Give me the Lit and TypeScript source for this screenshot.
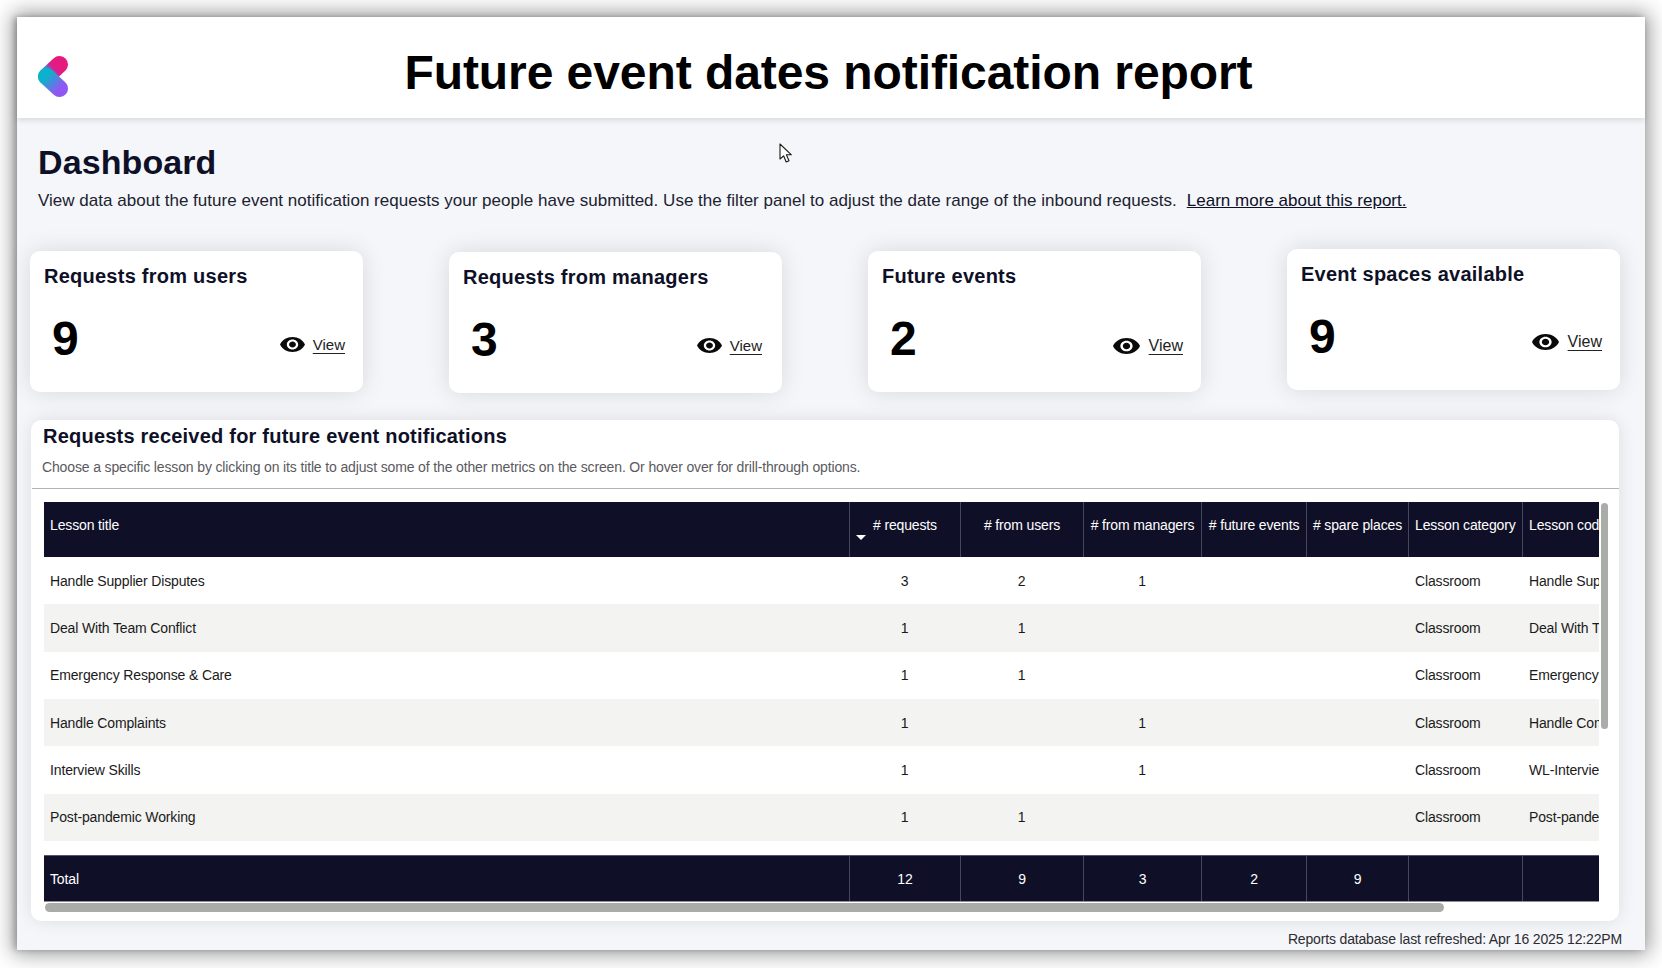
import { LitElement, html, css, svg } from "lit";
import { customElement } from "lit/decorators.js";

const eyePath = "M12 4.5C7 4.5 2.73 7.61 1 12c1.73 4.39 6 7.5 11 7.5s9.27-3.11 11-7.5c-1.73-4.39-6-7.5-11-7.5zM12 17c-2.76 0-5-2.24-5-5s2.24-5 5-5 5 2.24 5 5-2.24 5-5 5zm0-8c-1.66 0-3 1.34-3 3s1.34 3 3 3 3-1.34 3-3-1.34-3-3-3z";

const cards = [
  { title: "Requests from users", value: "9", cls: "" },
  { title: "Requests from managers", value: "3", cls: "c2" },
  { title: "Future events", value: "2", cls: "c3" },
  { title: "Event spaces available", value: "9", cls: "c4" },
];

const heads = ["Lesson title", "# requests", "# from users", "# from managers", "# future events", "# spare places", "Lesson category", "Lesson code"];

const rows = [
  ["Handle Supplier Disputes", "3", "2", "1", "", "", "Classroom", "Handle Supplier Disputes"],
  ["Deal With Team Conflict", "1", "1", "", "", "", "Classroom", "Deal With Team Conflict"],
  ["Emergency Response & Care", "1", "1", "", "", "", "Classroom", "Emergency Response & Care"],
  ["Handle Complaints", "1", "", "1", "", "", "Classroom", "Handle Complaints"],
  ["Interview Skills", "1", "", "1", "", "", "Classroom", "WL-Interview Skills"],
  ["Post-pandemic Working", "1", "1", "", "", "", "Classroom", "Post-pandemic Working"],
];

const totals = ["Total", "12", "9", "3", "2", "9", "", ""];

@customElement("app-root")
export class AppRoot extends LitElement {
  static styles = css`
    :host { display: block; width: 1662px; height: 968px; background: #fff; font-family: "Liberation Sans", Arial, sans-serif; overflow: hidden; }
    .outer { padding: 17px; height: 968px; box-sizing: border-box; }
    .window { position: relative; height: 933px; background: #f5f6fa; box-shadow: 0 0 20px 4px rgba(0,0,0,.4), -3px 0 6px rgba(0,0,0,.2); display: flex; flex-direction: column; }
    .top { height: 101px; box-sizing: border-box; background: #fff; box-shadow: 0 2px 6px rgba(0,0,0,.13); display: grid; grid-template-columns: 1fr auto 1fr; align-items: center; padding: 0 26px 0 21px; flex: none; }
    .logo { display: block; margin-top: 18px; }
    h1 { margin: 11px 0 0; font-size: 48px; line-height: 56px; font-weight: 700; color: #000; letter-spacing: -.07px; white-space: nowrap; }
    .intro { padding: 24px 0 0 21px; flex: none; }
    h2 { margin: 0; font-size: 34px; line-height: 40px; font-weight: 700; color: #0e1027; letter-spacing: .1px; }
    .desc { margin: 8px 0 0; font-size: 17px; line-height: 22px; letter-spacing: .02px; color: #202230; white-space: nowrap; display: flex; }
    .desc a { color: #0e1027; text-decoration: underline; margin-left: 10px; }
    .cards { display: flex; gap: 86px; padding: 0 0 0 13px; margin-top: 39px; height: 144px; flex: none; }
    .card { width: 333px; height: 141px; box-sizing: border-box; background: #fff; border-radius: 10px; box-shadow: 0 0 24px rgba(0,0,0,.12); padding: 13px 18px 0 14px; }
    .card.c2 { margin-top: 1px; }
    .card.c4 { margin-top: -2px; }
    .card-title { font-size: 20px; line-height: 24px; font-weight: 700; color: #0e1027; letter-spacing: .25px; white-space: nowrap; }
    .card-body { display: flex; align-items: center; margin-top: 23px; }
    .num { font-size: 48px; line-height: 56px; font-weight: 700; color: #000; margin-left: 8px; flex: 1; }
    .view { display: flex; align-items: center; gap: 8px; margin-top: 10px; font-size: 15px; color: #222; }
    .view svg { display: block; }
    .view span { text-decoration: underline; text-underline-offset: 3px; }
    .c2 .view { margin-right: 2px; }
    .c3 .view { font-size: 16px; margin-top: 14px; gap: 9px; }
    .c4 .view { font-size: 16px; gap: 9px; }
    .panel { margin: 25px 0 0 14px; width: 1588px; height: 501px; box-sizing: border-box; background: #fff; border-radius: 10px; box-shadow: 0 0 18px rgba(0,0,0,.1); flex: none; display: flex; flex-direction: column; }
    .panel h3 { margin: 4px 0 0 12px; font-size: 20px; line-height: 24px; font-weight: 700; color: #0e1027; letter-spacing: .22px; white-space: nowrap; }
    .panel p { margin: 8px 0 0 11px; font-size: 14px; letter-spacing: -.14px; line-height: 22px; color: #5a5a5e; white-space: nowrap; }
    .rule { height: 1px; background: #b4b4b4; margin: 10px 0 0 1px; flex: none; }
    .tablewrap { margin: 13px 0 0 13px; }
    .scroller { display: flex; align-items: flex-start; }
    .table { width: 1555px; height: 400px; overflow: hidden; display: flex; flex-direction: column; flex: none; }
    .row { display: grid; grid-template-columns: 805px 111px 123px 118px 105px 102px 114px 260px; font-size: 14px; letter-spacing: -.14px; color: #1a1a1a; }
    .cell { padding: 0 6px; display: flex; align-items: center; white-space: nowrap; overflow: hidden; box-sizing: border-box; min-width: 0; }
    .cell.end { padding-left: 7px; }
    .num-cell { justify-content: center; }
    .head, .total { background: #0f1027; color: #fff; flex: none; }
    .head { height: 55px; }
    .head .cell { border-left: 1px solid #45475c; padding-bottom: 9px; position: relative; }
    .head .cell.end { padding-left: 6px; }
    .head .cell:first-child, .total .cell:first-child { border-left: none; }
    .sort { position: absolute; left: 6px; top: 33px; width: 0; height: 0; border-left: 5px solid transparent; border-right: 5px solid transparent; border-top: 5px solid #fff; }
    .body-row { height: 47.33px; flex: none; }
    .body-row:nth-child(even) { background: #f3f3f1; }
    .rows { flex: none; }
    .total { height: 47px; margin-top: 14px; box-sizing: border-box; border-top: 1px solid #55566a; border-bottom: 1px solid #8d8e99; }
    .total .cell { border-left: 1px solid #45475c; padding-top: 2px; }
    .vthumb { width: 7px; height: 226px; margin: 1px 0 0 2px; border-radius: 4px; background: #a9aca9; flex: none; }
    .hthumb { width: 1399px; height: 9px; margin: 1px 0 0 1px; border-radius: 5px; background: #a9aca9; }
    .foot { margin: 8px 23px 0 0; text-align: right; font-size: 14px; letter-spacing: -.16px; line-height: 20px; color: #2c2c30; white-space: nowrap; }
    .cursor { position: absolute; left: 762px; top: 126px; display: block; }
  `;

  private eye(w: number, h: number) {
    return html`<svg width=${w} height=${h} viewBox="1 4.5 22 15" preserveAspectRatio="none"><path fill="#0a0a0a" d=${eyePath}></path></svg>`;
  }

  private logo() {
    return html`<svg class="logo" width="30" height="41" viewBox="0 0 30 41">
      <defs>
        <linearGradient id="lgA" gradientUnits="userSpaceOnUse" x1="21.5" y1="8.5" x2="8.5" y2="20.5">
          <stop offset="0" stop-color="#e8197c"></stop>
          <stop offset=".4" stop-color="#d8208e"></stop>
          <stop offset=".62" stop-color="#5a78c8"></stop>
          <stop offset="1" stop-color="#0cb2cc"></stop>
        </linearGradient>
        <linearGradient id="lgB" gradientUnits="userSpaceOnUse" x1="8.5" y1="20.5" x2="21.5" y2="32.5">
          <stop offset="0" stop-color="#0cb2cc"></stop>
          <stop offset="1" stop-color="#9058f2"></stop>
        </linearGradient>
      </defs>
      ${svg`<line x1="21.5" y1="8.5" x2="8.5" y2="20.5" stroke="url(#lgA)" stroke-width="17" stroke-linecap="round"></line>
      <line x1="8.5" y1="20.5" x2="21.5" y2="32.5" stroke="url(#lgB)" stroke-width="17" stroke-linecap="round"></line>`}
    </svg>`;
  }

  private cellClass(i: number) {
    return `cell ${i > 0 && i < 6 ? "num-cell" : ""} ${i >= 6 ? "end" : ""}`;
  }

  render() {
    return html`<div class="outer"><div class="window">
      <header class="top">
        <div>${this.logo()}</div>
        <h1>Future event dates notification report</h1>
        <div></div>
      </header>
      <section class="intro">
        <h2>Dashboard</h2>
        <div class="desc">View data about the future event notification requests your people have submitted. Use the filter panel to adjust the date range of the inbound requests. <a>Learn more about this report.</a></div>
      </section>
      <section class="cards">
        ${cards.map((c) => html`<div class="card ${c.cls}">
          <div class="card-title">${c.title}</div>
          <div class="card-body">
            <div class="num">${c.value}</div>
            <div class="view">${this.eye(c.cls === "c3" || c.cls === "c4" ? 27 : 25, c.cls === "c3" || c.cls === "c4" ? 16 : 15)}<span>View</span></div>
          </div>
        </div>`)}
      </section>
      <section class="panel">
        <h3>Requests received for future event notifications</h3>
        <p>Choose a specific lesson by clicking on its title to adjust some of the other metrics on the screen. Or hover over for drill-through options.</p>
        <div class="rule"></div>
        <div class="tablewrap">
          <div class="scroller">
            <div class="table">
              <div class="row head">
                ${heads.map((h, i) => html`<div class=${this.cellClass(i)}>${h}${i === 1 ? html`<span class="sort"></span>` : ""}</div>`)}
              </div>
              <div class="rows">
                ${rows.map((r) => html`<div class="row body-row">
                  ${r.map((v, i) => html`<div class=${this.cellClass(i)}>${v}</div>`)}
                </div>`)}
              </div>
              <div class="row total">
                ${totals.map((v, i) => html`<div class=${this.cellClass(i)}>${v}</div>`)}
              </div>
            </div>
            <div class="vthumb"></div>
          </div>
          <div class="hthumb"></div>
        </div>
      </section>
      <div class="foot">Reports database last refreshed: Apr 16 2025 12:22PM</div>
      <svg class="cursor" width="14" height="21" viewBox="0 0 14 21"><path d="M1 1 L1 16 L4.6 12.8 L7.2 19 L10 17.8 L7.4 11.8 L12.4 11.8 Z" fill="#fff" stroke="#1a1a1a" stroke-width="1.1" stroke-linejoin="round"></path></svg>
    </div></div>`;
  }
}
